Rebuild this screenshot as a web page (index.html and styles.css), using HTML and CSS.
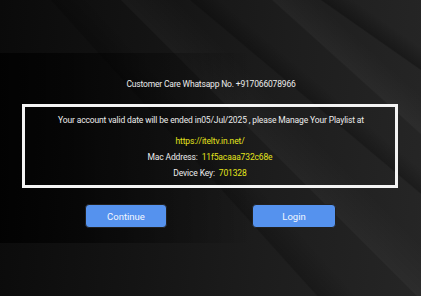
FILE: index.html
```html
<!DOCTYPE html>
<html>
<head>
<meta charset="utf-8">
<link rel="stylesheet" href="styles.css">
</head>
<body>
<div class="screen">
  <div class="dialog">
    <p class="care">Customer Care Whatsapp No. +917066078966</p>
    <div class="notice">
      <p class="line first">Your account valid date will be ended in05/Jul/2025 , please Manage Your Playlist at</p>
      <p class="line url"><span class="hl">https://iteltv.in.net/</span></p>
      <p class="line">Mac Address:&nbsp; <span class="hl">11f5acaaa732c68e</span></p>
      <p class="line">Device Key:&nbsp; <span class="hl">701328</span></p>
    </div>
    <div class="actions">
      <button class="btn">Continue</button>
      <button class="btn">Login</button>
    </div>
  </div>
</div>
</body>
</html>
```

FILE: styles.css
```css
* { box-sizing: border-box; }
html, body { margin: 0; padding: 0; }
body {
  width: 421px;
  height: 296px;
  overflow: hidden;
  font-family: Roboto, "Liberation Sans", sans-serif;
  color: #ececec;
}
.screen {
  width: 421px;
  height: 296px;
  background:
    linear-gradient(45deg, transparent 58%, rgba(255,255,255,0.03) 58.3%, transparent 66%),
    linear-gradient(40deg, transparent 70%, rgba(0,0,0,0.25) 70.3%, transparent 74%),
    linear-gradient(42deg, transparent 80%, rgba(255,255,255,0.035) 80.3%, transparent 86%),
    linear-gradient(48deg, transparent 46%, rgba(0,0,0,0.22) 46.3%, transparent 52%),
    linear-gradient(35deg, transparent 88%, rgba(0,0,0,0.3) 88.3%, transparent 92%),
    linear-gradient(95deg, #0a0a0a 0%, #141414 35%, #1d1d1d 65%, #262626 100%);
  padding-top: 53px;
}
.dialog {
  height: 190px;
  background: linear-gradient(90deg, rgba(0,0,0,0.8) 0%, rgba(0,0,0,0.4) 30%, rgba(0,0,0,0) 60%);
  padding-top: 25px;
}
.care {
  margin: 0;
  font-size: 8.5px;
  letter-spacing: -0.18px;
  line-height: 12px;
  text-align: center;
  padding-left: 1px;
}
.notice {
  margin: 14px 23px 0 22px;
  height: 84px;
  border: 3px solid #f4f4f4;
  padding-top: 7px;
  text-align: center;
}
.line {
  margin: 0;
  font-size: 8.5px;
  letter-spacing: -0.14px;
  line-height: 12px;
  margin-bottom: 4px;
}
.line.first { margin-bottom: 9px; padding-left: 2px; }
.hl { color: #e4e41c; }
.actions {
  display: flex;
  gap: 85px;
  padding-left: 85px;
  margin-top: 16px;
}
.btn {
  width: 82px;
  height: 24px;
  border: 1px solid #202020;
  border-radius: 4px;
  background: #5592ee;
  color: #f2f6ff;
  font-family: Roboto, "Liberation Sans", sans-serif;
  font-size: 9.5px;
  padding: 0;
}
.btn + .btn { width: 84px; }
```
